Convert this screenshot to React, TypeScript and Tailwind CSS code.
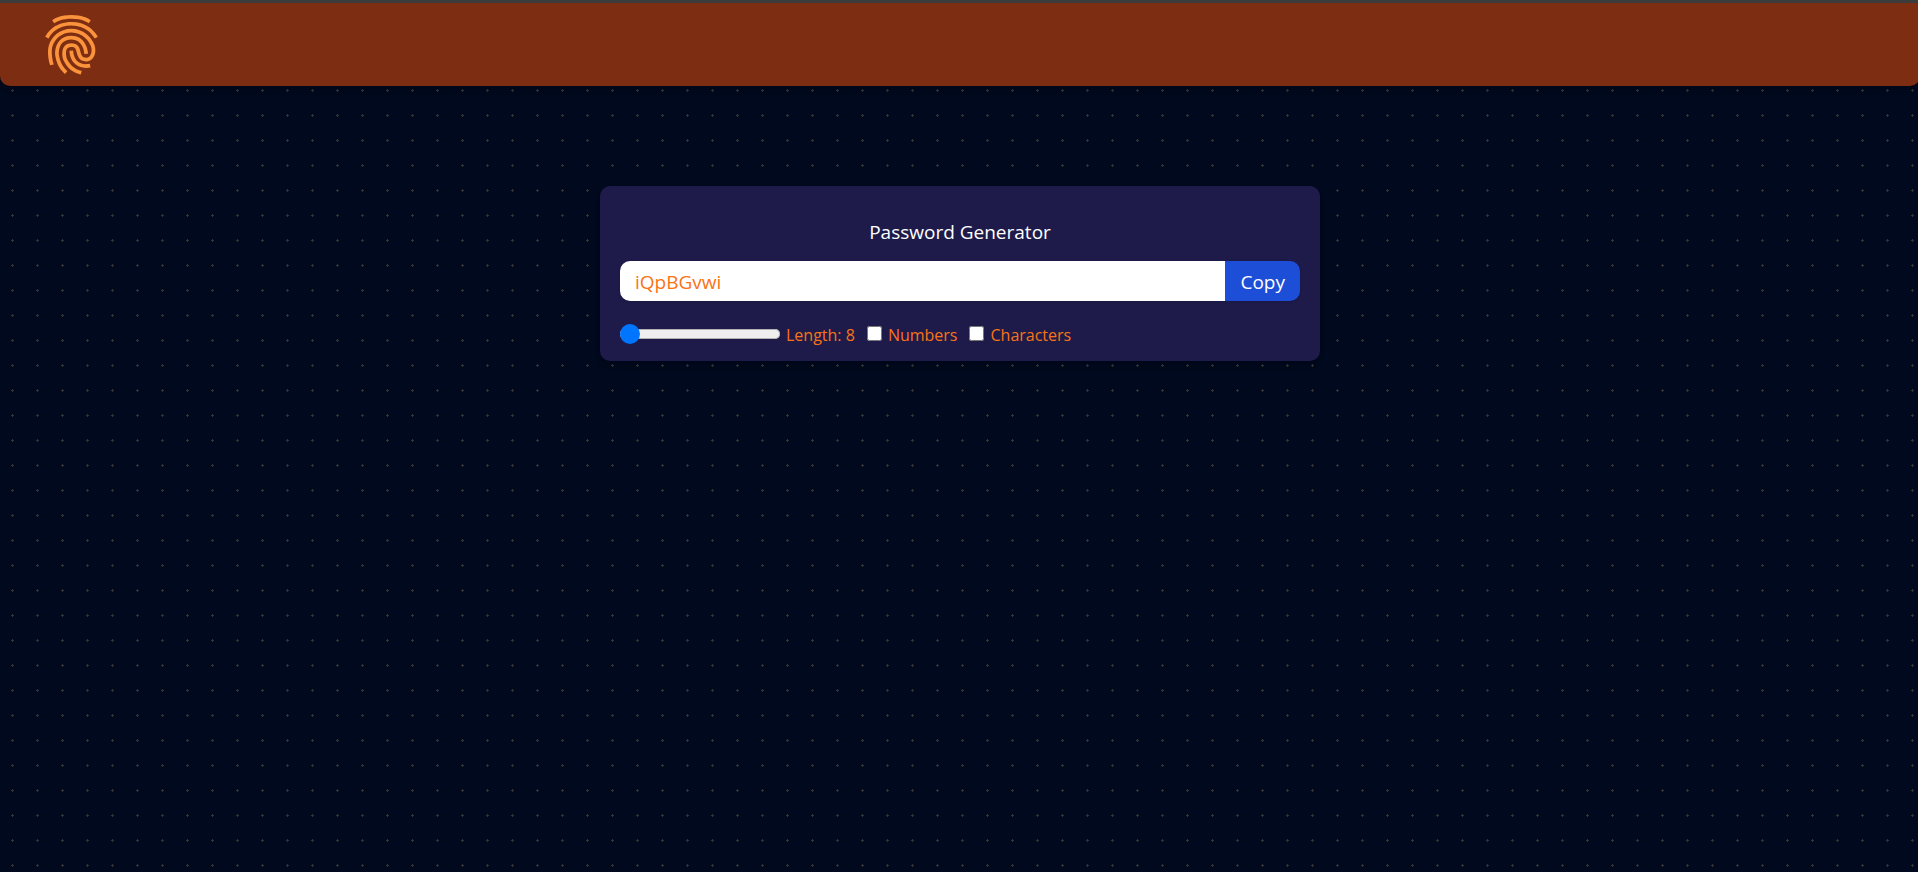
import { useState } from "react";
import { IoFingerPrintSharp } from "react-icons/io5";

export default function App() {
  const [length, setLength] = useState(8);
  const [numbers, setNumbers] = useState(false);
  const [characters, setCharacters] = useState(false);
  const [password, setPassword] = useState("iQpBGvwi");

  const generate = (size: number, withNumbers: boolean, withCharacters: boolean) => {
    let pool = "ABCDEFGHIJKLMNOPQRSTUVWXYZabcdefghijklmnopqrstuvwxyz";
    if (withNumbers) pool += "0123456789";
    if (withCharacters) pool += "!@#$%^&*-_+=[]{}~`";
    setPassword(Array.from({ length: size }, () => pool[Math.floor(Math.random() * pool.length)]).join(""));
  };

  return (
    <div className="min-h-screen overflow-hidden border-t-3 border-[#3c3c3c] bg-black bg-[radial-gradient(circle,#ffffff33_7%,#00091d_7%)] bg-[size:25px_25px] bg-origin-padding font-['Open_Sans','Noto_Sans',sans-serif]">
      <div className="-mr-0.5">
        <header className="flex items-center rounded-b-[10px] bg-[#7c2d12] px-10 py-[10px] shadow-md">
          <a href="#" aria-label="Home" className="text-[#fb923c]">
            <IoFingerPrintSharp className="size-[63px]" />
          </a>
        </header>
        <main className="mx-auto mt-[100px] w-full max-w-[720px] rounded-[10px] bg-[#1e1b4b] px-5 py-[15px] text-[#f97316] shadow-md">
          <h1 className="mt-4 mb-[14px] text-center text-[19px] leading-[30px] text-white">Password Generator</h1>
          <div className="mb-5 flex h-10 overflow-hidden rounded-[10px] shadow-sm">
            <input
              type="text"
              readOnly
              aria-label="Password"
              value={password}
              className="min-w-0 flex-1 bg-white px-[15px] pt-0.5 text-[19px] leading-[30px] outline-none"
            />
            <button
              type="button"
              onClick={() => navigator.clipboard?.writeText(password)}
              className="bg-[#1d4ed8] px-[15px] pt-0.5 text-[19px] leading-[30px] text-white"
            >
              Copy
            </button>
          </div>
          <div className="flex h-[25px] items-center gap-3 text-[16px] leading-[21px]">
            <div className="flex items-center gap-[6px]">
              <input
                id="length"
                type="range"
                min={8}
                max={100}
                value={length}
                onChange={(e) => {
                  setLength(Number(e.target.value));
                  generate(Number(e.target.value), numbers, characters);
                }}
                className="h-5 w-40 cursor-pointer appearance-none bg-transparent [&::-webkit-slider-runnable-track]:h-[10px] [&::-webkit-slider-runnable-track]:rounded-full [&::-webkit-slider-runnable-track]:bg-[#efefef] [&::-webkit-slider-runnable-track]:shadow-[inset_0_0_0_1px_#b2b2b2] [&::-webkit-slider-thumb]:-mt-[5px] [&::-webkit-slider-thumb]:size-5 [&::-webkit-slider-thumb]:appearance-none [&::-webkit-slider-thumb]:rounded-full [&::-webkit-slider-thumb]:bg-[#0075ff]"
              />
              <label htmlFor="length" className="pt-1">Length: {length}</label>
            </div>
            <div className="flex items-center gap-[6px]">
              <input
                id="numbers"
                type="checkbox"
                checked={numbers}
                onChange={() => {
                  setNumbers(!numbers);
                  generate(length, !numbers, characters);
                }}
                className="size-[15px]"
              />
              <label htmlFor="numbers" className="pt-1">Numbers</label>
            </div>
            <div className="flex items-center gap-[6px]">
              <input
                id="characters"
                type="checkbox"
                checked={characters}
                onChange={() => {
                  setCharacters(!characters);
                  generate(length, numbers, !characters);
                }}
                className="size-[15px]"
              />
              <label htmlFor="characters" className="pt-1">Characters</label>
            </div>
          </div>
        </main>
      </div>
    </div>
  );
}
